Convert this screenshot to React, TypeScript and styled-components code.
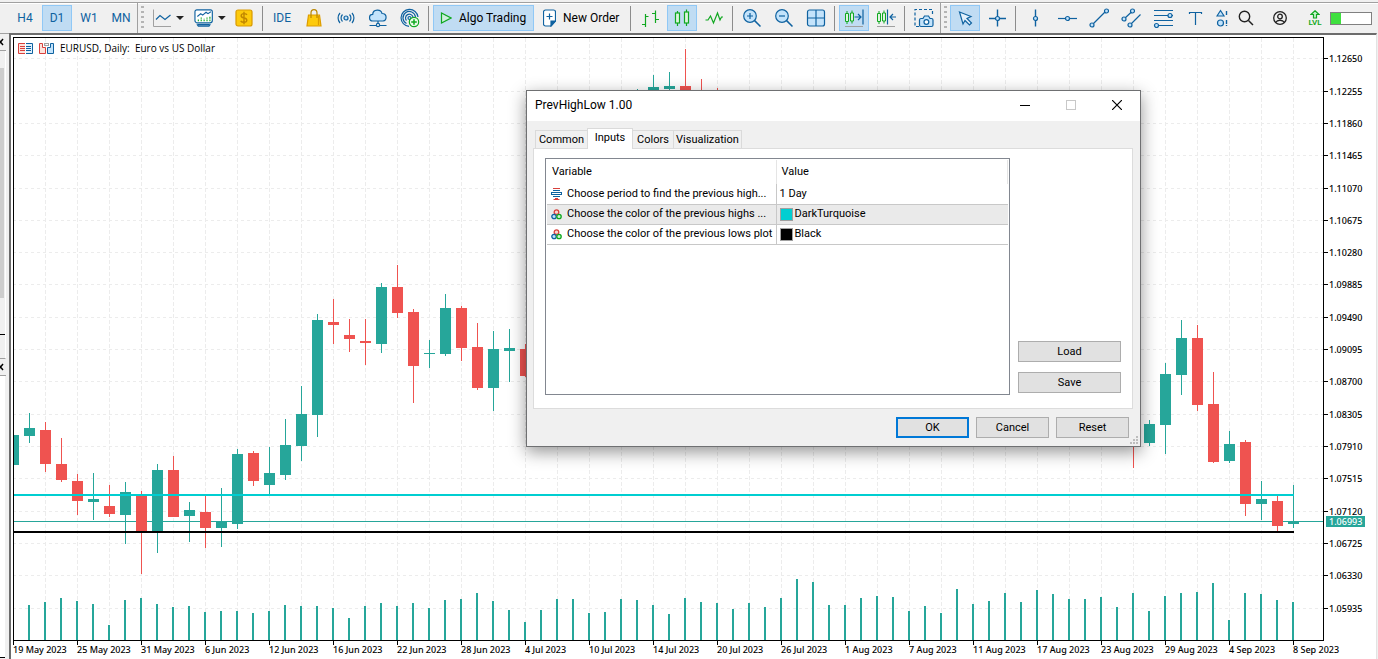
import React from "react";
import styled, { createGlobalStyle, css } from "styled-components";

const BLUE = "#0f62a0";
const PALE = "#c3e3fb";
const GREEN = "#10a820";
const UP = "#26a69a";
const DOWN = "#ef5350";
const CHART_FONT = `"Noto Sans", "Open Sans", sans-serif`;
const UI_FONT = `Roboto, "Open Sans", sans-serif`;

const GlobalStyle = createGlobalStyle`
  *, *::before, *::after { box-sizing: border-box; }
  body { margin: 0; background: #f0f0f0; color: #000; font-family: ${CHART_FONT}; overflow: hidden; }
  button { font: inherit; color: inherit; margin: 0; }
`;

const Page = styled.div`
  display: flex;
  flex-direction: column;
  min-height: 100vh;
  position: relative;
`;

/* ---------- toolbar ---------- */

const Toolbar = styled.header`
  display: flex;
  align-items: stretch;
  height: 33px;
  padding-top: 3px;
  background: linear-gradient(#f0f0f0 2px, #a0a0a0 2px, #a0a0a0 3px, #fff 3px, #fff 4px, #f0f0f0 4px);
  white-space: nowrap;
  overflow: hidden;
`;

const ToolGroup = styled.div<{ $first?: boolean; $last?: boolean }>`
  display: flex;
  align-items: center;
  gap: 2px;
  padding-left: ${(p) => (p.$first ? 10 : 0)}px;
  padding-right: ${(p) => (p.$last ? 0 : 1)}px;
  border-right: ${(p) => (p.$last ? "none" : "1px solid #a0a0a0")};
  ${(p) => p.$last && css`flex: 1;`}
`;

const Grip = styled.div`
  flex: none;
  width: 3px;
  margin: 3px;
  background: repeating-linear-gradient(#b4b4b4 0 2px, transparent 2px 5px);
`;

const ToolButton = styled.button<{ $w?: number; $on?: boolean; $start?: boolean }>`
  flex: none;
  display: flex;
  align-items: center;
  justify-content: ${(p) => (p.$start ? "flex-start" : "center")};
  gap: 5px;
  width: ${(p) => p.$w ?? 30}px;
  height: 26px;
  padding: 0 0 0 ${(p) => (p.$start ? 5 : 0)}px;
  border: 1px solid ${(p) => (p.$on ? "#90c8f6" : "transparent")};
  background: ${(p) => (p.$on ? "#c0dcf3" : "transparent")};
  font-family: ${UI_FONT};
  font-size: 12px;
  color: ${BLUE};
`;

const WideButton = styled(ToolButton)`
  gap: 7px;
  padding-left: 6px;
  color: #000;
`;

const Separator = styled.span`
  flex: none;
  width: 1px;
  height: 25px;
  margin: 0 2px 0 1px;
  background: #8c8c8c;
`;

const ConnectionMeter = styled.div`
  flex: none;
  width: 42px;
  height: 13px;
  border: 1px solid #808080;
  background: linear-gradient(90deg, #3fe03f 10px, #fff 10px);
`;

const Caret = () => (
  <svg width="8" height="4" viewBox="0 0 8 4"><path d="M0 0h8L4 4z" fill="#222" /></svg>
);

const Glyph = ({ children, w = 20, h = 20, c = BLUE }: { children: React.ReactNode; w?: number; h?: number; c?: string }) => (
  <svg width={w} height={h} viewBox={`0 0 ${w} ${h}`} fill="none" stroke={c} strokeWidth="1.2" aria-hidden="true">
    {children}
  </svg>
);

const ChartTypeIcon = () => (
  <Glyph w={18}>
    <path d="M.5 1.500v17H18" stroke="#a0a0a0" strokeWidth="1" />
    <path d="M3 11.500 7 7.500l5 4L17.500 7" />
  </Glyph>
);
const IndicatorIcon = () => (
  <Glyph w={20}>
    <path d="M3 1.500h14a2 2 0 0 1 2 2v9a2.500 2.500 0 0 1-2.500 2.500h-13A2.500 2.500 0 0 1 1 12.500v-9a2 2 0 0 1 2-2z" fill="#fff" />
    <path d="M3.500 8.500 7 5.500l2 1.500L12.500 4l2 1.500 3-2" />
    <path d="M4.500 13.500V11M7.500 13.500V9.500M10.500 13.500V10.500M13.500 13.500V9.500M16.500 13.500V8" stroke={GREEN} strokeDasharray="2 .6" />
    <path d="M3 16.500 4.500 18.500h11l1.500-2M4 16.800h12" />
  </Glyph>
);
const DollarIcon = () => (
  <Glyph c="#d99a00" w={18}>
    <rect x="1" y="2" width="16" height="16" rx="2" fill="#fdca0c" />
    <path d="M12 6.800c-.6-.8-1.600-1.200-3-1.200-3.600 0-3.800 3.600-.4 4.200 4.200.6 4.200 4.600.4 4.600-1.600 0-2.700-.5-3.300-1.500M9 3.800v12.400" stroke="#c08600" strokeWidth="1.400" />
  </Glyph>
);
const BagIcon = () => (
  <Glyph c="#dd9c00" w={16}>
    <path d="M2.500 7h11l1.500 11H1z" fill="#fdca0c" />
    <path d="M5 10V5c0-4.500 6-4.500 6 0v5" stroke="#b98500" />
    <path d="M12.500 8v9" />
  </Glyph>
);
const SignalIcon = () => (
  <Glyph>
    <circle cx="10" cy="10" r="2" fill={PALE} />
    <path d="M6.500 6.500a5 5 0 0 0 0 7M13.500 6.500a5 5 0 0 1 0 7M4 5a7.500 7.500 0 0 0 0 10M16 5a7.500 7.500 0 0 1 0 10" />
  </Glyph>
);
const CloudIcon = () => (
  <Glyph>
    <path d="M5 13a3.300 3.300 0 0 1-.3-6.600C5 1 13 .8 14 5.500c5.500-.2 5 7 1 7.500z" fill={PALE} />
    <path d="M10 13v3M1.500 17.500h17" />
    <circle cx="10" cy="17" r="1.600" fill="#fff" />
  </Glyph>
);
const RingsIcon = () => (
  <Glyph>
    <path d="M9 18.400A8.500 8.500 0 1 1 18 9M6.500 15.500A6.300 6.300 0 1 1 15.500 9M6.500 12.500A3.800 3.800 0 1 1 13 9" />
    <circle cx="9.500" cy="10" r="1.500" fill={PALE} />
    <circle cx="14" cy="14" r="4.700" fill="#e9fbe9" stroke={GREEN} />
    <path d="M11.200 14h5.600M14 11.200v5.600" stroke={GREEN} strokeWidth="1.500" />
  </Glyph>
);
const PlayIcon = () => (
  <Glyph w={12} h={12} c={GREEN}><path d="M1.500 1v10l9.500-5z" fill="#cfeedd" /></Glyph>
);
const NewOrderIcon = () => (
  <Glyph w={13} h={18}>
    <path d="M2.500 1h8a2 2 0 0 1 2 2v9L8 17H2.500a2 2 0 0 1-2-2V3a2 2 0 0 1 2-2z" fill="#fff" />
    <path d="M12.500 12H8v5z" fill={BLUE} />
    <path d="M3.500 7.500h6M6.500 4.500v6" />
  </Glyph>
);
const BarsIcon = () => (
  <Glyph c={GREEN}><path d="M5.500 6v13M2 16.500h3.500M5.500 8.500h3M15.500 2.500v12.500M12 5.500h3.500M15.500 11.500H19" /></Glyph>
);
const CandlesIcon = () => (
  <Glyph c={GREEN}>
    <path d="M5.500 3v2M5.500 15v3M14.500 1.500v2.500M14.500 15v3" />
    <rect x="3.500" y="5" width="4" height="10" fill="#dff3e0" />
    <rect x="12.500" y="4" width="4" height="11" fill="#dff3e0" />
  </Glyph>
);
const LineIcon = () => (
  <Glyph c={GREEN}><path d="M1.500 12H4l2.500-4 3 7 4-10 2.500 7 1.500-3h1.500" /></Glyph>
);
const ZoomIcon = ({ plus }: { plus?: boolean }) => (
  <Glyph>
    <circle cx="8" cy="8" r="6.300" fill={PALE} />
    <path d="M12.600 12.600 18.500 18.500" strokeWidth="1.500" />
    <path d={plus ? "M5 8h6M8 5v6" : "M5 8h6"} />
  </Glyph>
);
const TileIcon = () => (
  <Glyph>
    <rect x="1.500" y="2" width="17" height="16" rx="2" fill={PALE} />
    <path d="M10 2v16M1.500 10h17" />
  </Glyph>
);
const ShiftIcon = ({ back }: { back?: boolean }) => (
  <Glyph>
    <path d="M3 3v13M8 2.500v13" stroke={GREEN} strokeWidth="1" />
    <path d="M1.500 5.500h3v8h-3zM6.500 5h3v8h-3z" stroke={GREEN} fill="#dff3e0" strokeWidth="1" />
    {back
      ? <path d="M11.500 1.500v15M20 9h-6M17 6l-3 3 3 3" />
      : <path d="M19 1.500v15M10.500 9H17M14 6l3 3-3 3" />}
    <path d="M1 18.500h18" stroke="#a0a0a0" strokeWidth="1" />
  </Glyph>
);
const CameraIcon = () => (
  <Glyph>
    <path d="M5 18.500H1V1.500h17.500v6" strokeDasharray="3 2" />
    <path d="M7 10.500h2L10.500 8h4l1.500 2.500h1.500q1.500 0 1.500 1.500v5q0 1.500-1.500 1.500H7Q5.500 18.500 5.500 17v-5q0-1.500 1.500-1.500z" fill={PALE} />
    <circle cx="12.400" cy="14" r="2.400" fill="#fff" />
  </Glyph>
);
const CursorIcon = () => (
  <Glyph><path d="M4.500 4 16 8.500l-4 2 4.500 4.500-2 2L10 12.500l-2 3.500z" fill="#e4f1fc" /></Glyph>
);
const CrossIcon = () => (
  <Glyph>
    <path d="M10.500 1.500v17M2 10.500h17" strokeWidth="1.400" />
    <circle cx="10.500" cy="10.500" r="2" fill={PALE} />
  </Glyph>
);
const VLineIcon = () => (
  <Glyph><path d="M10.500 1.500v17" strokeWidth="1.400" /><circle cx="10.500" cy="10.500" r="2" fill={PALE} /></Glyph>
);
const HLineIcon = () => (
  <Glyph><path d="M1 10.500h19" strokeWidth="1.200" /><circle cx="10.500" cy="10.500" r="2" fill={PALE} /></Glyph>
);
const TrendIcon = () => (
  <Glyph>
    <path d="M3 17 17 3" />
    <circle cx="3" cy="17" r="2" fill={PALE} /><circle cx="17.500" cy="3" r="2" fill={PALE} />
  </Glyph>
);
const ChannelIcon = () => (
  <Glyph>
    <path d="M3 11 11.500 3M9 17 19.500 6.500" />
    <circle cx="3" cy="11" r="2" fill={PALE} /><circle cx="11.500" cy="3" r="2" fill={PALE} /><circle cx="9" cy="17" r="2" fill={PALE} />
  </Glyph>
);
const FiboIcon = () => (
  <Glyph>
    <path d="M1 2.500h19M1 7.500h19M1 12.500h19M1 17.500h19" />
    <circle cx="17" cy="7.500" r="2" fill={PALE} /><circle cx="3.500" cy="17.500" r="2" fill={PALE} />
  </Glyph>
);
const TextIcon = () => (
  <Glyph><path d="M4 4.500h13M10.500 4.500v12.500M4.500 4v2M16.500 4v2" /></Glyph>
);
const ShapesIcon = () => (
  <Glyph w={12}>
    <path d="M4.500 2.500 8 8H1z" fill={PALE} />
    <circle cx="4.500" cy="15" r="3" fill={PALE} />
    <path d="M10.500 3v5M10.500 12v6" strokeWidth="1.400" strokeDasharray="4 1" />
  </Glyph>
);
const SearchIcon = () => (
  <Glyph w={16} h={16} c="#222"><circle cx="6.500" cy="6.500" r="5.200" strokeWidth="1.400" /><path d="m10.500 10.500 4.500 4.500" strokeWidth="1.500" /></Glyph>
);
const UserIcon = () => (
  <Glyph w={16} h={16} c="#222">
    <circle cx="8" cy="8" r="6.300" strokeWidth="1.300" /><circle cx="8" cy="6.500" r="2.300" strokeWidth="1.300" />
    <path d="M3.500 12.500c2-3 7-3 9 0" strokeWidth="1.300" />
  </Glyph>
);

const LevelBadge = styled.span`
  display: flex;
  flex-direction: column;
  align-items: center;
  font-size: 8px;
  line-height: 8px;
  font-weight: 600;
  color: ${GREEN};
`;

/* ---------- workspace ---------- */

const Workspace = styled.main`
  display: flex;
  flex: 1;
`;

const SidePanels = styled.aside`
  flex: none;
  display: flex;
  flex-direction: column;
  width: 9px;
  padding-right: 3px;
  border-top: 1px solid #a0a0a0;
`;

const PanelCaption = styled.div`
  display: flex;
  align-items: center;
  height: 17px;
  border-bottom: 1px solid #a0a0a0;
`;

const ScrollStrip = styled.div`
  height: 308px;
  padding-top: 17px;
  border-bottom: 1px solid #a0a0a0;
  border-right: 1px solid #fff;
`;

const ScrollThumb = styled.div`
  width: 4px;
  height: 230px;
  margin-bottom: 36px;
  background: #cdcdcd;
`;

const ScrollMark = styled.div`
  width: 5px;
  height: 1px;
  background: #000;
`;

const ListStrip = styled.div`
  flex: 1;
  margin: 0 1px 1px 0;
  background: #fff;
  border-bottom: 1px solid #000;
`;

const CloseMark = () => (
  <svg width="4" height="8" viewBox="0 0 4 8"><path d="M-2 1 3 7M3 1-2 7" stroke="#000" strokeWidth="1.500" /></svg>
);

const ChartWindow = styled.section`
  flex: 1;
  min-width: 0;
  display: flex;
  flex-direction: column;
  padding: 2px 0 0 2px;
  margin-right: 1px;
  background: #fff;
  border-style: solid;
  border-width: 2px 1px 0 2px;
  border-color: #6c6c6c #e3e3e3 #fff #6c6c6c;
`;

const PlotRow = styled.div`
  display: flex;
  height: 604px;
`;

const Plot = styled.div`
  flex: 1;
  min-width: 0;
  position: relative;
  border: 1px solid #000;
  svg { display: block; }
`;

const ChartTitle = styled.h1`
  position: absolute;
  top: 3px;
  left: 4px;
  display: flex;
  align-items: center;
  gap: 6px;
  margin: 0;
  font-family: "Open Sans", ${CHART_FONT};
  font-size: 10px;
  line-height: 14px;
  font-weight: 400;
  white-space: pre;
`;

const PriceAxis = styled.svg`
  flex: none;
  display: block;
  width: 52px;
  height: 604px;
  font-size: 9px;
  font-weight: 500;
`;

const TimeAxis = styled.ol`
  display: flex;
  margin: 0;
  padding: 0;
  list-style: none;
  font-size: 9px;
  font-weight: 500;
  line-height: 10px;
`;

const TimeLabel = styled.li`
  flex: 0 0 64px;
  white-space: nowrap;
  &::before {
    content: "";
    display: block;
    width: 1px;
    height: 4px;
    background: #000;
  }
`;

type Candle = [slot: number, high: number, low: number, top: number, bottom: number, up: 0 | 1];

/* Slots are 16px apart; heights are measured from the top of the window. */
const candles: Candle[] = [
  [0, 435, 465, 435, 465, 1], [1, 413, 443, 428, 436, 1], [2, 422, 472, 430, 464, 0], [3, 438, 482, 464, 480, 0],
  [4, 474, 515, 481, 501, 0], [5, 473, 520, 499, 502, 1], [6, 485, 517, 506, 514, 0], [7, 482, 544, 492, 515, 1],
  [8, 491, 574, 495, 532, 0], [9, 464, 553, 470, 532, 1], [10, 456, 517, 470, 517, 0], [11, 502, 542, 510, 516, 1],
  [12, 496, 548, 512, 528, 0], [13, 488, 547, 522, 528, 1], [14, 449, 529, 454, 524, 1], [15, 451, 486, 453, 481, 0],
  [16, 447, 495, 473, 485, 1], [17, 419, 480, 445, 475, 1], [18, 386, 461, 414, 446, 1], [19, 314, 437, 320, 415, 1],
  [20, 299, 344, 322, 325, 0], [21, 319, 352, 335, 339, 0], [22, 319, 365, 341, 343, 0], [23, 283, 353, 287, 344, 1],
  [24, 265, 318, 287, 313, 0], [25, 309, 403, 312, 366, 0], [26, 340, 368, 353, 354, 1], [27, 294, 356, 308, 354, 1],
  [28, 306, 361, 308, 348, 0], [29, 323, 390, 347, 388, 0], [30, 331, 411, 349, 388, 1], [31, 329, 382, 348, 351, 1],
  [32, 344, 377, 349, 376, 0], [39, 89, 130, 92, 120, 1], [40, 75, 110, 87, 100, 1], [41, 72, 95, 86, 89, 1],
  [42, 49, 110, 86, 100, 0], [43, 79, 120, 90, 110, 0], [44, 88, 130, 92, 120, 0], [70, 410, 468, 415, 440, 0],
  [71, 420, 446, 424, 443, 1], [72, 363, 454, 374, 425, 1], [73, 320, 395, 338, 375, 1], [74, 325, 411, 338, 405, 0],
  [75, 372, 463, 404, 462, 0], [76, 431, 463, 444, 461, 1], [77, 440, 516, 442, 504, 0], [78, 481, 520, 499, 504, 1],
  [79, 496, 531, 501, 526, 0], [80, 485, 528, 521, 524, 1],
];

const volumes = [
  605, 602, 598, 601, 604, 625, 600, 598, 604, 607, 606, 612, 611, 611, 613, 611, 605, 606, 606, 608,
  618, 606, 603, 606, 603, 608, 600, 599, 593, 601, 610, 622, 610, 599, 599, 613, 612, 599, 600, 605,
  614, 598, 602, 603, 609, 603, 607, 598, 579, 582, 605, 605, 598, 596, 597, 611, 606, 613, 589, 604,
  601, 593, 602, 590, 594, 599, 599, 597, 607, 593, 611, 596, 593, 592, 583, 620, 593, 594, 600, 602,
];

const priceLevels: [number, string][] = [
  [58, "1.12650"], [91, "1.12255"], [123, "1.11860"], [155, "1.11465"], [188, "1.11070"], [220, "1.10675"],
  [252, "1.10280"], [284, "1.09885"], [317, "1.09490"], [349, "1.09095"], [381, "1.08700"], [414, "1.08305"],
  [446, "1.07910"], [478, "1.07515"], [511, "1.07120"], [543, "1.06725"], [575, "1.06330"], [608, "1.05935"],
];

const dates = [
  "19 May 2023", "25 May 2023", "31 May 2023", "6 Jun 2023", "12 Jun 2023", "16 Jun 2023", "22 Jun 2023",
  "28 Jun 2023", "4 Jul 2023", "10 Jul 2023", "14 Jul 2023", "20 Jul 2023", "26 Jul 2023", "1 Aug 2023",
  "7 Aug 2023", "11 Aug 2023", "17 Aug 2023", "23 Aug 2023", "29 Aug 2023", "4 Sep 2023", "8 Sep 2023",
];

const ORIGIN = 38;

const PriceChart = () => (
  <svg width="100%" height="602" shapeRendering="crispEdges" role="img" aria-label="EURUSD daily candles">
    <g stroke="#ececec">
      {priceLevels.map(([y]) => (
        <line key={y} x1="0" x2="100%" y1={y - ORIGIN + 0.5} y2={y - ORIGIN + 0.5} strokeDasharray="3 3" strokeDashoffset="1" />
      ))}
      {Array.from({ length: 40 }, (_, k) => (
        <line key={k} x1={32 * k + 31.5} x2={32 * k + 31.5} y1="0" y2="602" strokeDasharray="4 2" />
      ))}
    </g>
    <rect x="0" y={521 - ORIGIN} width="100%" height="1" fill={UP} />
    {volumes.map((y, k) => (
      <rect key={k} x={16 * k + 14} y={y - ORIGIN} width="2" height={640 - y} fill={UP} />
    ))}
    {candles.map(([slot, high, low, top, bottom, up]) => (
      <g key={slot} fill={up ? UP : DOWN}>
        <rect x={16 * slot - 1} y={high - ORIGIN} width="1" height={low - high} />
        <rect x={16 * slot - 6} y={top - ORIGIN} width="11" height={bottom - top} />
      </g>
    ))}
    <rect x="0" y={494 - ORIGIN} width="1280" height="2" fill="#00ced1" />
    <rect x="0" y={531 - ORIGIN} width="1280" height="2" fill="#000" />
  </svg>
);

const BookIcon = () => (
  <svg width="15" height="11" viewBox="0 0 15 11" fill="none">
    <path d="M7 .5H.5v10H7" stroke="#d8403c" fill="#fde3dc" /><path d="M8 .5h6.500v10H8" stroke={BLUE} fill="#e2f1fc" />
    <path d="M2 3.500h5M2 5.500h5M2 7.500h5" stroke="#d8403c" /><path d="M8 3.500h5M8 5.500h5M8 7.500h5" stroke={BLUE} />
  </svg>
);
const TradeIcon = () => (
  <svg width="15" height="11" viewBox="0 0 15 11" fill="none">
    <path d="M.5.5h3v4h3v6h-6z" stroke="#d8403c" fill="#fde3dc" />
    <path d="M14.500.5h-3v4h-3v6h6z" stroke={BLUE} fill={PALE} />
    <rect x="5.500" y=".5" width="4" height="2" stroke="#a0a0a0" />
  </svg>
);

/* ---------- dialog ---------- */

const Dialog = styled.div`
  position: absolute;
  left: 526px;
  top: 90px;
  width: 615px;
  border: 1px solid #6f7072;
  background: #f0f0f0;
  box-shadow: 0 5px 16px rgba(0, 0, 0, 0.42);
  font-family: ${UI_FONT};
  font-size: 11px;
  line-height: 14px;
`;

const TitleBar = styled.div`
  display: flex;
  height: 30px;
  padding: 0 0 2px 8px;
  background: #fff;
`;

const DialogTitle = styled.h2`
  flex: 1;
  margin: 0;
  font-size: 12px;
  line-height: 28px;
  font-weight: 400;
`;

const CaptionButton = styled.button`
  display: flex;
  align-items: center;
  justify-content: center;
  width: 46px;
  padding: 0;
  border: 0;
  background: transparent;
`;

const TabList = styled.div`
  display: flex;
  align-items: flex-end;
  height: 27px;
  padding: 0 8px;
`;

const Tab = styled.button<{ $w: number; $active?: boolean; $joined?: boolean }>`
  width: ${(p) => p.$w}px;
  height: ${(p) => (p.$active ? 21 : 18)}px;
  margin-bottom: ${(p) => (p.$active ? -1 : 0)}px;
  margin-left: ${(p) => (p.$active ? -1 : 0)}px;
  padding: 0 0 ${(p) => (p.$active ? 2 : 0)}px;
  border: 1px solid #dadada;
  border-bottom: 0;
  border-left-width: ${(p) => (p.$joined ? 0 : 1)}px;
  background: ${(p) => (p.$active ? "#fff" : "#f0f0f0")};
  white-space: nowrap;
`;

const TabPanel = styled.div`
  display: flex;
  gap: 8px;
  margin: 0 7px 0 6px;
  padding: 9px 11px 13px;
  border: 1px solid #dcdcdc;
  background: #fff;
`;

const ListBox = styled.div`
  flex: 1;
  height: 237px;
  padding: 1px;
  border: 1px solid #828790;
`;

const InputTable = styled.table`
  width: 100%;
  border-collapse: collapse;
  table-layout: fixed;
  th, td { padding: 0; text-align: left; font-weight: 400; white-space: nowrap; }
  th { height: 24px; padding-left: 5px; border-right: 1px solid #e5e5e5; }
  th:first-child { width: 229px; }
`;

const InputRow = styled.tr<{ $selected?: boolean }>`
  height: 20px;
  background: ${(p) => (p.$selected ? "#eaeaea" : "#fff")};
  td { border-bottom: 1px solid #c8c8c8; }
  td:first-child { border-right: 1px solid #c8c8c8; }
`;

const CellContent = styled.span<{ $gap: number; $pad: number }>`
  display: flex;
  align-items: center;
  gap: ${(p) => p.$gap}px;
  padding-left: ${(p) => p.$pad}px;
  svg { flex: none; }
`;

const Swatch = styled.span<{ $color: string }>`
  flex: none;
  width: 13px;
  height: 13px;
  border: 1px solid #a0a0a0;
  background: ${(p) => p.$color};
`;

const SideActions = styled.div`
  display: flex;
  flex-direction: column;
  justify-content: flex-end;
  gap: 10px;
  padding-bottom: 2px;
`;

const PushButton = styled.button<{ $w: number; $default?: boolean }>`
  width: ${(p) => p.$w}px;
  height: 21px;
  padding: 0;
  border: ${(p) => (p.$default ? "2px solid #0078d7" : "1px solid #adadad")};
  background: #e1e1e1;
`;

const Footer = styled.div`
  display: flex;
  justify-content: flex-end;
  gap: 7px;
  padding: 8px 11px;
  position: relative;
`;

const SizeGrip = styled.svg`
  position: absolute;
  right: 2px;
  bottom: 2px;
`;

const EnumIcon = () => (
  <svg width="11" height="12" viewBox="0 0 11 12" fill="none">
    <path d="M2 .5h7M4 10.500h3M2.500 11.500h6" stroke="#d8403c" /><path d="M2 2.500h7M2 8.500h7" stroke={BLUE} />
    <rect x=".5" y="4.500" width="10" height="2" stroke={BLUE} />
  </svg>
);
const ColorIcon = () => (
  <svg width="11" height="11" viewBox="0 0 11 11" fill="none" strokeWidth="1.300">
    <circle cx="5.500" cy="3.200" r="2.300" stroke="#d8403c" fill="#fbd5cf" />
    <circle cx="3" cy="7.500" r="2.200" stroke={BLUE} fill={PALE} />
    <circle cx="8" cy="7.500" r="2.200" stroke={GREEN} fill="#c9f2cf" />
  </svg>
);

const inputs = [
  { name: "Choose period to find the previous high...", value: "1 Day", icon: <EnumIcon /> },
  { name: "Choose the color of the previous highs ...", value: "DarkTurquoise", color: "#00ced1", icon: <ColorIcon />, selected: true },
  { name: "Choose the color of the previous lows plot", value: "Black", color: "#000", icon: <ColorIcon /> },
];

const PropertiesDialog = () => (
  <Dialog role="dialog" aria-labelledby="dialog-title">
    <TitleBar>
      <DialogTitle id="dialog-title">PrevHighLow 1.00</DialogTitle>
      <CaptionButton aria-label="Minimize"><svg width="10" height="1"><rect width="10" height="1" /></svg></CaptionButton>
      <CaptionButton aria-label="Maximize" disabled>
        <svg width="10" height="10"><rect x=".5" y=".5" width="9" height="9" fill="none" stroke="#c8c8c8" /></svg>
      </CaptionButton>
      <CaptionButton aria-label="Close"><svg width="10" height="10"><path d="M0 0l10 10M10 0 0 10" stroke="#000" strokeWidth="1.200" /></svg></CaptionButton>
    </TitleBar>
    <TabList role="tablist">
      <Tab role="tab" $w={53}>Common</Tab>
      <Tab role="tab" $w={46} $active aria-selected="true">Inputs</Tab>
      <Tab role="tab" $w={41} $joined>Colors</Tab>
      <Tab role="tab" $w={68} $joined>Visualization</Tab>
    </TabList>
    <TabPanel role="tabpanel">
      <ListBox>
        <InputTable>
          <thead><tr><th scope="col">Variable</th><th scope="col">Value</th></tr></thead>
          <tbody>
            {inputs.map((row) => (
              <InputRow key={row.name} $selected={row.selected}>
                <td><CellContent $gap={5} $pad={4}>{row.icon}{row.name}</CellContent></td>
                <td><CellContent $gap={2} $pad={3}>{row.color && <Swatch $color={row.color} />}{row.value}</CellContent></td>
              </InputRow>
            ))}
          </tbody>
        </InputTable>
      </ListBox>
      <SideActions>
        <PushButton $w={103}>Load</PushButton>
        <PushButton $w={103}>Save</PushButton>
      </SideActions>
    </TabPanel>
    <Footer>
      <PushButton $w={73} $default>OK</PushButton>
      <PushButton $w={73}>Cancel</PushButton>
      <PushButton $w={73}>Reset</PushButton>
      <SizeGrip width="8" height="8" fill="#bdbdbd">
        <path d="M6 0h2v2H6zM3 3h2v2H3zM6 3h2v2H6zM0 6h2v2H0zM3 6h2v2H3zM6 6h2v2H6z" />
      </SizeGrip>
    </Footer>
  </Dialog>
);

const tool = (label: string, icon: React.ReactNode, on = false) => (
  <ToolButton key={label} aria-label={label} $on={on}>{icon}</ToolButton>
);

export default function App() {
  return (
    <Page>
      <GlobalStyle />
      <Toolbar>
        <ToolGroup $first>
          <ToolButton>H4</ToolButton>
          <ToolButton $on>D1</ToolButton>
          <ToolButton>W1</ToolButton>
          <ToolButton>MN</ToolButton>
        </ToolGroup>
        <Grip />
        <ToolGroup>
          <ToolButton $w={39} $start aria-label="Chart type"><ChartTypeIcon /><Caret /></ToolButton>
          <ToolButton $w={39} $start aria-label="Indicators"><IndicatorIcon /><Caret /></ToolButton>
          {tool("Quotes", <DollarIcon />)}
          <Separator />
          <ToolButton>IDE</ToolButton>
          {tool("Market", <BagIcon />)}
          {tool("Signals", <SignalIcon />)}
          {tool("Virtual hosting", <CloudIcon />)}
          {tool("Copy trading", <RingsIcon />)}
          <Separator />
          <WideButton $w={101} $on $start><PlayIcon />Algo Trading</WideButton>
          <WideButton $w={91} $start><NewOrderIcon />New Order</WideButton>
          <Separator />
          {tool("Bar chart", <BarsIcon />)}
          {tool("Candlesticks", <CandlesIcon />, true)}
          {tool("Line chart", <LineIcon />)}
          <Separator />
          {tool("Zoom in", <ZoomIcon plus />)}
          {tool("Zoom out", <ZoomIcon />)}
          {tool("Tile windows", <TileIcon />)}
          <Separator />
          {tool("Auto scroll", <ShiftIcon />, true)}
          {tool("Chart shift", <ShiftIcon back />)}
          <Separator />
          {tool("Screenshot", <CameraIcon />)}
        </ToolGroup>
        <Grip />
        <ToolGroup $last>
          {tool("Cursor", <CursorIcon />, true)}
          {tool("Crosshair", <CrossIcon />)}
          <Separator />
          {tool("Vertical line", <VLineIcon />)}
          {tool("Horizontal line", <HLineIcon />)}
          {tool("Trendline", <TrendIcon />)}
          {tool("Channel", <ChannelIcon />)}
          {tool("Fibonacci", <FiboIcon />)}
          {tool("Text", <TextIcon />)}
          <ToolButton $w={20} aria-label="Shapes"><ShapesIcon /></ToolButton>
          <ToolButton $w={24} aria-label="Search"><SearchIcon /></ToolButton>
          <ToolButton $w={40} aria-label="Account"><UserIcon /></ToolButton>
          <ToolButton $w={26} aria-label="Level">
            <LevelBadge>
              <svg width="10" height="9" viewBox="0 0 10 9"><path d="M5 .8 9 4.500H6.500V8h-3V4.500H1z" fill="#c9f2cf" stroke={GREEN} strokeWidth="1.200" /></svg>
              LVL
            </LevelBadge>
          </ToolButton>
          <ConnectionMeter />
        </ToolGroup>
      </Toolbar>
      <Workspace>
        <SidePanels>
          <PanelCaption><CloseMark /></PanelCaption>
          <ScrollStrip><ScrollThumb /><ScrollMark /></ScrollStrip>
          <PanelCaption><CloseMark /></PanelCaption>
          <ListStrip />
        </SidePanels>
        <ChartWindow>
          <PlotRow>
            <Plot>
              <PriceChart />
              <ChartTitle><BookIcon /><TradeIcon />EURUSD, Daily:  Euro vs US Dollar</ChartTitle>
            </Plot>
            <PriceAxis>
              {priceLevels.map(([y, label]) => (
                <g key={label}>
                  <rect x="0" y={y - 37} width="4" height="1" />
                  <text x="5" y={y - 33}>{label}</text>
                </g>
              ))}
              <rect x="2" y={516 - 37} width="39" height="11" fill={UP} />
              <text x="5" y={525 - 37} fill="#fff">1.06993</text>
            </PriceAxis>
          </PlotRow>
          <TimeAxis>
            {dates.map((d) => <TimeLabel key={d}>{d}</TimeLabel>)}
          </TimeAxis>
        </ChartWindow>
      </Workspace>
      <PropertiesDialog />
    </Page>
  );
}
